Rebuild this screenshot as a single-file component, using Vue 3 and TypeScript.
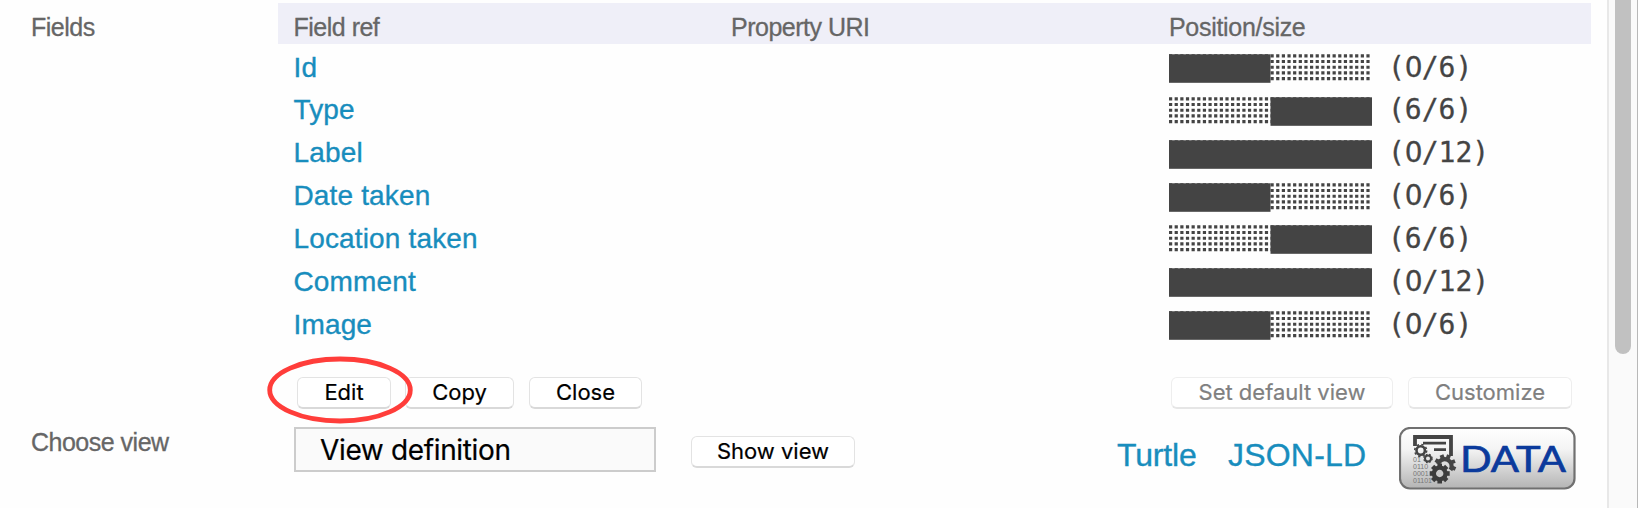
<script setup lang="ts">
interface Field {
  name: string
  start: number
  width: number
}

const fields: Field[] = [
  { name: 'Id', start: 0, width: 6 },
  { name: 'Type', start: 6, width: 6 },
  { name: 'Label', start: 0, width: 12 },
  { name: 'Date taken', start: 0, width: 6 },
  { name: 'Location taken', start: 6, width: 6 },
  { name: 'Comment', start: 0, width: 12 },
  { name: 'Image', start: 0, width: 6 },
]

const METER = 203
const cell = METER / 12
const dotRows = [0, 1, 2, 3, 4].map((i) => 1.9 + i * 5.67)
const gearTeeth = [0, 45, 90, 135]
</script>

<template>
  <div class="page">
    <main class="content">
      <section class="fields">
        <div class="label fields-label">Fields</div>
        <div class="table">
          <div class="head">
            <span class="first">Field ref</span>
            <span>Property URI</span>
            <span class="wide">Position/size</span>
          </div>
          <div v-for="f in fields" :key="f.name" class="row">
            <a class="link">{{ f.name }}</a>
            <span></span>
            <div class="position">
              <svg class="meter" :width="METER" height="29" :viewBox="`0 0 ${METER} 29`">
                <path
                  v-for="y in dotRows"
                  :key="y"
                  :d="`M0 ${y}H201`"
                  stroke="#444"
                  stroke-width="3.1"
                  stroke-dasharray="3.2 2.44"
                />
                <rect :x="f.start * cell" y="0.3" :width="f.width * cell" height="28.5" fill="#444" />
              </svg>
              <span class="mono">(<b v-if="f.start === 0">0</b><template v-else>{{ f.start }}</template>/{{ f.width }})</span>
            </div>
          </div>
        </div>
      </section>

      <section class="actions">
        <div class="marked">
          <button class="btn edit">Edit</button>
          <svg class="ring" width="150" height="72" viewBox="0 0 150 72">
            <ellipse cx="75" cy="36" rx="70.3" ry="31" fill="none" stroke="#ff3d3a" stroke-width="4.8" />
          </svg>
        </div>
        <button class="btn copy">Copy</button>
        <button class="btn close">Close</button>
        <span class="spacer"></span>
        <button class="btn default" disabled>Set default view</button>
        <button class="btn customize" disabled>Customize</button>
      </section>

      <section class="views">
        <div class="label">Choose view</div>
        <div class="select">View definition</div>
        <button class="btn show">Show view</button>
        <span class="spacer"></span>
        <a class="format turtle">Turtle</a>
        <a class="format json">JSON-LD</a>
        <svg class="data" width="177" height="63" viewBox="0 0 177 63">
          <defs>
            <linearGradient id="face" x1="0" y1="0" x2="0" y2="1">
              <stop offset="0" stop-color="#ffffff" />
              <stop offset="0.35" stop-color="#f4f4f4" />
              <stop offset="1" stop-color="#b4b4b4" />
            </linearGradient>
          </defs>
          <rect x="1" y="1" width="174.5" height="60.5" rx="10" fill="url(#face)" stroke="#707070" stroke-width="2.2" />
          <g fill="none" stroke="#444">
            <path d="M16 19V10H52V29" stroke-width="3.8" />
            <path d="M24 16.2H47M35 22.7H47" stroke-width="2.8" />
            <circle cx="21.7" cy="23.5" r="4.2" stroke-width="2.6" />
            <circle cx="21.7" cy="23.5" r="6" stroke-width="1.5" stroke-dasharray="2.3 2.4" />
            <circle cx="29" cy="31.5" r="3" stroke-width="2" />
            <circle cx="29" cy="31.5" r="4.2" stroke-width="1.2" stroke-dasharray="1.7 1.7" />
          </g>
          <g fill="#777" class="bits">
            <text x="14" y="34.5">01</text>
            <text x="14" y="41.5">0110</text>
            <text x="14" y="48.5">0001</text>
            <text x="14" y="55.5">01101</text>
          </g>
          <g transform="translate(46 38)" stroke="#444" fill="none">
            <path d="M-7 -1A7 7 0 1 1 5.5 5" stroke-width="4.2" />
            <path d="M-9.5 -5L-6 -3M-3.5 -10L-2 -6M4 -10L2.5 -6M10 -4L6 -2.5M10.5 4L6 2" stroke-width="4" />
          </g>
          <g transform="translate(40.7 46.5)">
            <rect v-for="a in gearTeeth" :key="a" x="-2.3" y="-10" width="4.6" height="20" fill="#3c3c3c" :transform="`rotate(${a})`" />
            <circle r="5.8" fill="#c9c9c9" stroke="#3c3c3c" stroke-width="4.2" />
          </g>
          <text class="data-text" x="61" y="45" textLength="106" lengthAdjust="spacingAndGlyphs">DATA</text>
        </svg>
      </section>
    </main>
    <aside class="scrollbar"><div class="thumb"></div></aside>
  </div>
</template>

<style>
body {
  background: #fefefe;
}
</style>

<style scoped>
.page {
  display: flex;
  width: 1638px;
  height: 508px;
  overflow: hidden;
  box-sizing: border-box;
  font-family: "Liberation Sans", Arial, sans-serif;
}
.content {
  width: 1607px;
  padding-top: 3px;
  box-sizing: border-box;
}
.fields {
  display: flex;
  height: 361px;
}
.label,
.head {
  font-size: 25px;
  color: #666;
  letter-spacing: -0.5px;
  -webkit-text-stroke: 0.3px currentColor;
}
.label {
  width: 263px;
  padding-left: 31px;
  box-sizing: border-box;
  line-height: 28px;
}
.fields-label {
  width: 278px;
  padding-top: 10px;
}
.table {
  width: 1313px;
}
.head,
.row {
  display: grid;
  grid-template-columns: 438px 437px 1fr;
  padding-left: 15px;
}
.head {
  height: 41px;
  line-height: 49px;
  background: #efeff8;
}
.head .first {
  padding-left: 0.5px;
}
.head .wide {
  padding-left: 1px;
  letter-spacing: -0.3px;
}
.row {
  height: 42.85px;
}
.row:nth-child(2) {
  margin-top: 2.6px;
}
.link {
  padding-left: 0.5px;
  font-size: 28px;
  line-height: 41px;
  color: #188dbd;
  letter-spacing: 0.15px;
  -webkit-text-stroke: 0.35px currentColor;
}
.position {
  display: flex;
  padding-left: 1px;
}
.meter {
  display: block;
  margin-top: 7.4px;
}
.mono {
  margin-left: 16px;
  font-family: "DejaVu Sans Mono", monospace;
  font-size: 28px;
  line-height: 42px;
  color: #444;
  -webkit-text-stroke: 0.3px currentColor;
}
.mono b {
  font-family: "DejaVu Sans", sans-serif;
  font-weight: 400;
  letter-spacing: -0.95px;
}
.actions {
  display: flex;
  height: 63px;
  padding: 13px 35px 0 297px;
  box-sizing: border-box;
}
.btn {
  height: 32px;
  padding: 0;
  box-sizing: border-box;
  flex: none;
  border: 1px solid #e3e3e3;
  border-bottom: 2px solid #d9d9d9;
  border-radius: 6px;
  background: #fff;
  color: #000;
  font-family: Inter, sans-serif;
  font-size: 22px;
  line-height: 29px;
  -webkit-text-stroke: 0.2px currentColor;
}
.btn:disabled {
  color: #808080;
  border-color: #eee;
  border-bottom-color: #e6e6e6;
}
.marked {
  position: relative;
}
.ring {
  position: absolute;
  left: -32px;
  top: -23px;
}
.edit { width: 94px; }
.copy { width: 109px; margin-left: 14px; }
.close { width: 113px; margin-left: 15px; }
.default { width: 222px; margin-right: 15px; }
.customize { width: 164px; }
.spacer {
  flex: 1;
}
.views {
  display: flex;
  padding-right: 31px;
}
.views .label {
  width: 294px;
  padding-top: 1px;
}
.select {
  width: 362px;
  height: 45px;
  box-sizing: border-box;
  border: 2px solid #ccc;
  background: #fafafa;
  padding-left: 24px;
  font-family: Inter, sans-serif;
  font-size: 28px;
  line-height: 42px;
  letter-spacing: -0.35px;
  -webkit-text-stroke: 0.2px currentColor;
}
.show {
  width: 164px;
  margin: 9px 0 0 35px;
}
.format {
  font-size: 32px;
  line-height: 36px;
  margin-top: 10px;
  color: #188dbd;
  -webkit-text-stroke: 0.35px currentColor;
}
.turtle {
  width: 111px;
  letter-spacing: -0.15px;
}
.json {
  width: 171px;
  letter-spacing: 0.2px;
}
.data {
  display: block;
}
.data-text {
  font-family: Lato, sans-serif;
  font-size: 37px;
  fill: #0b3a9c;
  stroke: #0b3a9c;
  stroke-width: 0.7px;
}
.bits {
  font: 7px "Liberation Sans", sans-serif;
}
.scrollbar {
  width: 31px;
  box-sizing: border-box;
  border-left: 2px solid #e8e8e8;
  border-right: 1px solid #b8b8b8;
  background: #fafafa;
  padding-left: 6px;
}
.thumb {
  width: 16px;
  height: 354px;
  border-radius: 0 0 8px 8px;
  background: #c1c1c1;
}
</style>
